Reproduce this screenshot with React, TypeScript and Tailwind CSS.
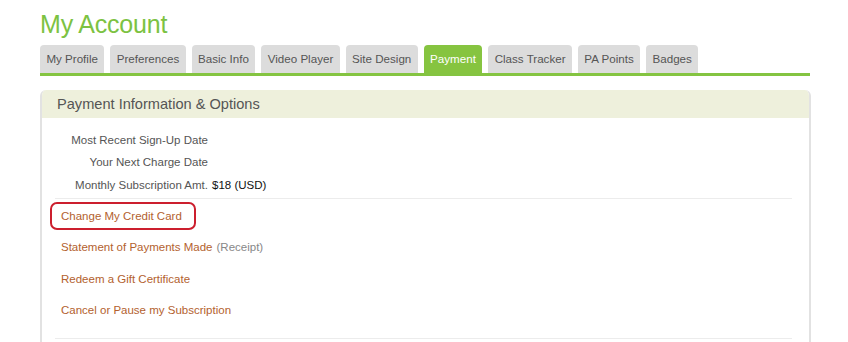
import React from 'react';

const tabs = [
  'My Profile',
  'Preferences',
  'Basic Info',
  'Video Player',
  'Site Design',
  'Payment',
  'Class Tracker',
  'PA Points',
  'Badges',
];

const infoRows = [
  { label: 'Most Recent Sign-Up Date', value: '' },
  { label: 'Your Next Charge Date', value: '' },
  { label: 'Monthly Subscription Amt.', value: '$18 (USD)' },
];

export default function App() {
  return (
    <div
      className="w-[848px] h-[342px] overflow-hidden bg-white pl-[40px] pr-[38px] pt-[8px]"
      style={{ fontFamily: '"Liberation Sans", Arial, sans-serif' }}
    >
      {/* Title */}
      <h1 className="text-[25px] leading-[32px] text-[#7cc242] tracking-[-0.2px]">My Account</h1>

      {/* Tabs */}
      <div className="mt-[5px] flex gap-[6px] border-b-[3px] border-[#84c441]">
        {tabs.map((t) => (
          <div
            key={t}
            className={
              t === 'Payment'
                ? 'h-[28px] px-[6.4px] flex items-center rounded-t-[4px] bg-[#86c440] text-white text-[11.6px]'
                : 'h-[28px] px-[6.4px] flex items-center rounded-t-[4px] bg-[#dcdcdc] text-[#555] text-[11.6px]'
            }
          >
            {t}
          </div>
        ))}
      </div>

      {/* Panel */}
      <div className="mt-[14px] w-[771px] rounded-t-[6px] border-l-2 border-r-2 border-[#e2e2e2] overflow-hidden">
        <div className="h-[28px] bg-[#eef0dc] px-[15px] pt-[1px] flex items-center text-[14.6px] text-[#555]">
          Payment Information &amp; Options
        </div>

        <div className="px-[13px] pt-[11px] pb-[10px]">
          {infoRows.map((r) => (
            <div key={r.label} className="h-[22.5px] flex items-center text-[11.5px]">
              <span className="w-[153px] text-right text-[#555]">{r.label}</span>
              {r.value && <span className="ml-[4px] text-[#111]">{r.value}</span>}
            </div>
          ))}

          <div className="mt-[1px] h-px bg-[#ececec] w-[737px]" />

          <div className="pt-[2px]">
            <div className="h-[31.5px] flex items-center">
              <span className="-ml-[5px] h-[28px] flex items-center rounded-[7px] border-2 border-[#cc1f2e] pl-[9px] pr-[12px] text-[11.5px] text-[#b3612e]">
                Change My Credit Card
              </span>
            </div>
            <div className="h-[31.5px] flex items-center pl-[6px] text-[11.5px] text-[#b3612e]">
              Statement of Payments Made<span className="ml-[4px] text-[#888]">(Receipt)</span>
            </div>
            <div className="h-[31.5px] flex items-center pl-[6px] text-[11.5px] text-[#b3612e]">
              Redeem a Gift Certificate
            </div>
            <div className="h-[31.5px] flex items-center pl-[6px] text-[11.5px] text-[#b3612e]">
              Cancel or Pause my Subscription
            </div>
          </div>

          <div className="mt-[11px] h-px bg-[#ececec] w-[737px]" />
        </div>
      </div>
    </div>
  );
}
